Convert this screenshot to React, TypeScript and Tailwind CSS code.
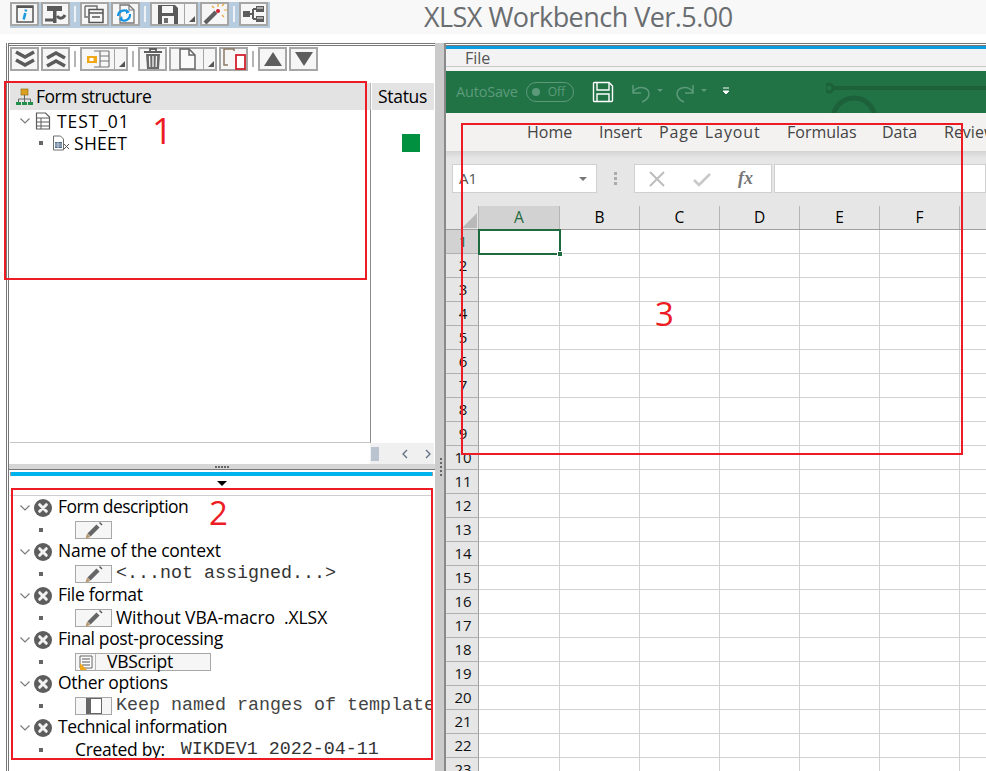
import React from "react";

const UI = "font-['Open_Sans','Noto_Sans',sans-serif]";
const MONO = "font-['Liberation_Mono',monospace]";

type P = { children?: React.ReactNode; w?: number; h?: number };
const Ic = ({ children, w = 20, h = 20 }: P) => (
  <svg width={w} height={h} viewBox={`0 0 ${w} ${h}`} fill="none" className="shrink-0">
    {children}
  </svg>
);

const Btn = ({ children, wide }: { children: React.ReactNode; wide?: boolean }) => (
  <div className={`h-[24px] flex items-center justify-center bg-[#f6f6f6] border-2 border-[#a6a6a6] shrink-0 ${wide ? "w-[35px] border-r" : "w-[29px]"}`}>
    {children}
  </div>
);
const Drop = () => (
  <div className="w-[13px] h-[24px] bg-[#f6f6f6] border-2 border-l-0 border-[#a6a6a6] shrink-0 relative">
    <div className="absolute right-[1px] bottom-[2px] w-0 h-0 border-l-[6px] border-l-transparent border-b-[6px] border-b-[#555]" />
  </div>
);
const Sep = () => <div className="w-[2px] h-[16px] bg-[#b5b5b5] mx-[3px] shrink-0" />;
const SepLight = () => <div className="w-[2px] h-[16px] bg-[#eef2f6] mx-[4px] shrink-0" />;

const Info = () => (
  <Ic>
    <rect x="2" y="2" width="16" height="16" stroke="#555" strokeWidth="1.5" />
    <path d="M2 3h16" stroke="#555" strokeWidth="2" />
    <path d="M11 5.500l-.3 2M10.300 9l-1.600 6.500" stroke="#1d9be0" strokeWidth="2.600" />
  </Ic>
);
const Tools = () => (
  <Ic w={24}>
    <path d="M3 2h15v5H3zM9 7h3.500v12H9z" fill="#595959" />
    <path d="M1 16h10M13 12c2 3 6 3 8-1" stroke="#595959" strokeWidth="3" />
  </Ic>
);
const Windows = () => (
  <Ic w={22}>
    <path d="M1 2h12v3M1 2v11h3" stroke="#6f6f6f" strokeWidth="1.400" />
    <rect x="5" y="5.500" width="14" height="13" stroke="#555" strokeWidth="1.500" fill="#f6f6f6" />
    <path d="M5 9h14M8 13h8" stroke="#555" strokeWidth="1.500" />
  </Ic>
);
const Refresh = () => (
  <Ic w={22}>
    <path d="M5 1h9l5 5v13H5z" stroke="#777" strokeWidth="1.300" fill="#f8f8f8" />
    <path d="M14 1v5h5" stroke="#777" strokeWidth="1.200" />
    <path d="M3 12a6 6 0 0 1 10-4M15 10a6 6 0 0 1-10 5" stroke="#1495e3" strokeWidth="2.200" />
    <path d="M11 5l4 3-4 2zM8 17l-4-2 3-3z" fill="#1495e3" />
  </Ic>
);
const Floppy = () => (
  <Ic w={22}>
    <path d="M1 1h17l3 3v16H1z" fill="#5a5a5a" />
    <rect x="5" y="2" width="11" height="7" fill="#f6f6f6" />
    <rect x="5" y="12" width="12" height="8" fill="#f6f6f6" />
    <rect x="7" y="14" width="4" height="5" fill="#6d6d6d" />
  </Ic>
);
const Wand = () => (
  <Ic w={24} h={22}>
    <path d="M2 20L13 9" stroke="#5f5f5f" strokeWidth="4" />
    <circle cx="15" cy="8" r="2" fill="#d21f2d" />
    <path d="M15 1v3M21 7h3M19 3l2-2M19 12l2 2M9 3l2 2" stroke="#e9a93a" strokeWidth="1.200" />
  </Ic>
);
const Net = () => (
  <Ic w={24}>
    <path d="M1 7h7v6H1zM14 2h8v6h-8zM14 12h8v6h-8z" fill="#5c5c5c" />
    <path d="M8 10h3M11 5v10M11 5h3M11 15h3" stroke="#5c5c5c" strokeWidth="2" />
    <path d="M15 4h6M15 14h6" stroke="#f6f6f6" />
  </Ic>
);
const ChevD = () => (
  <Ic w={22}>
    <path d="M2 3l9 5 9-5M2 11l9 5 9-5" stroke="#5b5b5b" strokeWidth="3.600" />
  </Ic>
);
const ChevU = () => (
  <Ic w={22}>
    <path d="M2 9l9-5 9 5M2 17l9-5 9 5" stroke="#5b5b5b" strokeWidth="3.600" />
  </Ic>
);
const Struct = () => (
  <Ic w={24}>
    <path d="M8 2h15M14 2v16M8 18h15M14 7h9M14 12h9M23 2v16" stroke="#777" strokeWidth="1.200" />
    <rect x="1" y="7" width="10" height="7" fill="#f0a818" />
    <rect x="3.500" y="9" width="4" height="3" fill="#fff" />
  </Ic>
);
const Trash = () => (
  <Ic w={22} h={22}>
    <path d="M2 4h18M8 4V1h6v3" stroke="#5e5e5e" strokeWidth="1.800" />
    <path d="M4 6h14l-1 15H5z" fill="#6a6a6a" />
    <path d="M7.500 8l.4 11M11 8v11M14.500 8l-.4 11" stroke="#f6f6f6" strokeWidth="1.300" />
  </Ic>
);
const Doc = () => (
  <Ic w={20} h={22}>
    <path d="M3 1h9l6 6v14H3z" stroke="#666" strokeWidth="1.500" fill="#fafafa" />
    <path d="M12 1v6h6" stroke="#666" strokeWidth="1.500" />
  </Ic>
);
const Copy = () => (
  <Ic w={24} h={22}>
    <path d="M12 3V1H2v16h4" stroke="#8a7a66" strokeWidth="1.500" />
    <rect x="14" y="7" width="9" height="14" stroke="#d4202f" strokeWidth="1.800" fill="#fff" />
  </Ic>
);

const SheetTree = () => (
  <Ic w={16} h={18}>
    <path d="M1.500 1h9l4 4v12h-13z" stroke="#5d5d5d" strokeWidth="1.200" fill="#fff" />
    <path d="M1.500 6h13M1.500 10h13M1.500 14h13M6 6v11" stroke="#5d5d5d" />
  </Ic>
);
const SheetX = () => (
  <Ic w={18} h={16}>
    <path d="M1.500 1h7l3 3v11h-10z" stroke="#6d6d6d" fill="#fff" />
    <rect x="3" y="7" width="7" height="6" fill="#4e6d8c" />
    <path d="M3 9h7M3 11h7M6 7v6" stroke="#fff" strokeWidth=".6" />
    <path d="M12 9l5 5M17 9l-5 5" stroke="#555" />
  </Ic>
);
const Org = () => (
  <Ic w={17} h={17}>
    <rect x="5" y="1" width="7" height="6" fill="#dba01e" stroke="#98711c" strokeWidth=".7" />
    <path d="M8.500 7v4M2.500 14v-3h12v3M8.500 11v3" stroke="#666" />
    <path d="M0 14h5v3H0zM6 14h5v3H6zM12 14h5v3h-5z" fill="#1f9148" />
  </Ic>
);
const Caret = () => (
  <Ic w={10} h={6}>
    <path d="M.5.5L5 5 9.500.5" stroke="#777" strokeWidth="1.100" />
  </Ic>
);
const Dot = () => <div className="w-[4px] h-[4px] bg-[#666] shrink-0" />;

const XCircle = () => (
  <Ic w={18} h={18}>
    <circle cx="9" cy="9" r="9" fill="#5d5d5d" />
    <path d="M5.700 5.700l6.600 6.600M12.300 5.700l-6.600 6.600" stroke="#f2f2f2" strokeWidth="3" strokeLinecap="round" />
  </Ic>
);
const Pencil = () => (
  <Ic w={18} h={18}>
    <path d="M4 14L13 5" stroke="#666" strokeWidth="4.400" />
    <path d="M14 2l1-1 2.500 2.500-1 1z" fill="#555" />
    <path d="M0.500 17.500l1.500-5 3.500 3.500z" fill="#b99a6e" />
  </Ic>
);
const FieldBtn = ({ children, w = "w-[37px]" }: { children?: React.ReactNode; w?: string }) => (
  <div className={`${w} h-[18px] bg-[#f6f6f6] border border-[#a8a8a8] flex items-center justify-center shrink-0`}>
    {children}
  </div>
);

const Section = ({ title, track, children }: { title: string; track: string; children: React.ReactNode }) => (
  <div className="flex flex-col">
    <div className="h-[22px] flex items-center pl-[10px]">
      <Caret />
      <div className="ml-[4px]"><XCircle /></div>
      <span className={`ml-[6px] mt-[-2px] text-[17.5px] text-black leading-none whitespace-nowrap ${track}`}>{title}</span>
    </div>
    <div className="h-[22px] flex items-center pl-[29px]">
      <Dot />
      <div className="ml-[32px] flex items-center min-w-0">{children}</div>
    </div>
  </div>
);

const rows = Array.from({ length: 23 }, (_, i) => i + 1);
const cols = ["A", "B", "C", "D", "E", "F"];

export default function App() {
  return (
    <div className={`relative w-[986px] h-[771px] overflow-hidden bg-white flex flex-col ${UI}`}>
      {/* Title bar */}
      <div className="h-[34px] bg-[#f8f8f8] shrink-0 relative flex items-start pl-[10px]">
        <div className="mt-[2px] h-[26px] bg-[#b7cddf] flex items-start pr-[2px]">
          <div className="flex items-center gap-[2px]">
            <Btn><Info /></Btn>
            <Btn><Tools /></Btn>
          </div>
          <div className="flex items-center h-[24px]"><SepLight /></div>
          <div className="flex items-center gap-[2px]">
            <Btn><Windows /></Btn>
            <Btn><Refresh /></Btn>
          </div>
          <div className="flex items-center h-[24px]"><SepLight /></div>
          <div className="flex items-center">
            <Btn wide><Floppy /></Btn>
            <Drop />
            <div className="w-[2px]" />
            <Btn><Wand /></Btn>
          </div>
          <div className="flex items-center h-[24px]"><SepLight /></div>
          <Btn><Net /></Btn>
        </div>
        <div className="absolute left-[424px] top-0 text-[27px] leading-[33px] text-[#6a6d70] whitespace-nowrap tracking-[-0.54px]">
          XLSX Workbench Ver.5.00
        </div>
      </div>
      <div className="h-[9px] shrink-0" />

      {/* Body */}
      <div className="flex-1 flex min-h-0 pl-[6px]">
        {/* Left column */}
        <div className="w-[429px] shrink-0 flex flex-col border-l-[3px] border-double border-[#777]">
          <div className="h-[421px] shrink-0 flex flex-col border-t-[3px] border-double border-[#777] pl-[1px] pr-[1px]">
            <div className="h-[26px] shrink-0 flex items-start pt-[1px] bg-white">
              <div className="flex items-center gap-[2px]">
                <Btn><ChevD /></Btn>
                <Btn><ChevU /></Btn>
              </div>
              <div className="flex items-center h-[24px] mx-[1px]"><Sep /></div>
              <Btn wide><Struct /></Btn>
              <Drop />
              <div className="flex items-center h-[24px] mx-[1px]"><Sep /></div>
              <Btn><Trash /></Btn>
              <div className="w-[2px]" />
              <Btn wide><Doc /></Btn>
              <Drop />
              <div className="w-[2px]" />
              <Btn><Copy /></Btn>
              <div className="flex items-center h-[24px] mx-[1px]"><Sep /></div>
              <div className="flex gap-[2px]">
                <Btn><div className="w-0 h-0 border-l-[9px] border-r-[9px] border-b-[14px] border-l-transparent border-r-transparent border-b-[#5d5d5d]" /></Btn>
                <Btn><div className="w-0 h-0 border-l-[9px] border-r-[9px] border-t-[14px] border-l-transparent border-r-transparent border-t-[#5d5d5d]" /></Btn>
              </div>
            </div>
            <div className="h-[11px] shrink-0" />
            <div className="h-[27px] shrink-0 flex bg-[#e3e3e3] text-[17.5px] text-black">
              <div className="w-[361px] flex items-center pl-[6px] gap-[3px] border-r border-[#b5b5b5] shrink-0">
                <Org />
                <span className="tracking-[-0.5px]">Form structure</span>
              </div>
              <div className="flex-1 flex items-center pl-[6px] tracking-[-0.3px] border-l border-white">Status</div>
            </div>
            <div className="h-[333px] shrink-0 flex">
              <div className="w-[361px] shrink-0 border-r border-[#8a8a8a] border-b border-b-[#c4c4c4] text-[17.5px] text-black">
                <div className="h-[22px] flex items-center pl-[10px]">
                  <Caret />
                  <div className="ml-[5px]"><SheetTree /></div>
                  <span className="ml-[6px] tracking-[0.9px]">TEST_01</span>
                </div>
                <div className="h-[22px] flex items-center pl-[29px]">
                  <Dot />
                  <div className="ml-[9px]"><SheetX /></div>
                  <span className="ml-[4px] tracking-[0.3px]">SHEET</span>
                </div>
              </div>
              <div className="flex-1 relative">
                <div className="absolute left-[31px] top-[24px] w-[18px] h-[18px] bg-[#009040]" />
              </div>
            </div>
            <div className="h-[21px] shrink-0 flex justify-end">
              <div className="w-[64px] bg-[#f0f0f0] flex items-center pl-[1px] text-[#5d6f80]">
                <div className="w-[8px] h-[14px] bg-[#b9c4d0]" />
                <svg width="50" height="12" viewBox="0 0 50 12" fill="none" className="ml-[3px]">
                  <path d="M25 2l-4 4 4 4" stroke="#5d6f80" strokeWidth="1.300" />
                  <path d="M44 2l4 4-4 4" stroke="#5d6f80" strokeWidth="1.300" />
                </svg>
              </div>
            </div>
          </div>
          {/* Horizontal splitter */}
          <div className="h-[6px] shrink-0 bg-[#d6d6d6] flex items-center justify-center gap-[1px] border-b border-[#777] relative">
            {[0, 1, 2, 3, 4].map((i) => (
              <div key={i} className="w-[2px] h-[2px] bg-[#666]" />
            ))}
          </div>
          {/* Lower pane */}
          <div className="flex-1 min-h-0 pl-[1px] pr-[2px] flex flex-col">
            <div className="h-[2px] shrink-0" />
            <div className="h-[4px] shrink-0 bg-[#00b4ef] border-x border-[#9a9a9a]" />
            <div className="h-[20px] shrink-0 border-b border-[#cdcdcd] flex justify-center pt-[5px]">
              <div className="w-0 h-0 border-l-[5px] border-r-[5px] border-t-[5px] border-l-transparent border-r-transparent border-t-black" />
            </div>
            <div className="overflow-hidden pt-[1px]">
              <Section title="Form description" track="tracking-[-0.54px]">
                <FieldBtn><Pencil /></FieldBtn>
              </Section>
              <Section title="Name of the context" track="tracking-[-0.22px]">
                <FieldBtn><Pencil /></FieldBtn>
                <span className={`${MONO} ml-[4px] text-[18.33px] leading-none text-[#333] whitespace-nowrap`}>&lt;...not assigned...&gt;</span>
              </Section>
              <Section title="File format" track="tracking-[-0.3px]">
                <FieldBtn><Pencil /></FieldBtn>
                <span className="ml-[4px] text-[17.5px] leading-none text-black tracking-[-0.06px] whitespace-pre">Without VBA-macro  .XLSX</span>
              </Section>
              <Section title="Final post-processing" track="tracking-[-0.35px]">
                <FieldBtn w="w-[136px]">
                  <div className="w-full h-full flex items-center">
                    <div className="w-[20px] h-full border-r border-[#b5b5b5] flex items-center justify-center relative shrink-0">
                      <Ic w={14} h={14}>
                        <path d="M1 1h12v12H1z" fill="#fff" stroke="#666" />
                        <path d="M3 4h8M3 7h8M3 10h8" stroke="#555" strokeWidth="1.200" />
                      </Ic>
                      <div className="absolute left-[4px] bottom-0 w-0 h-0 border-r-[7px] border-r-transparent border-b-[7px] border-b-[#efa81c]" />
                    </div>
                    <span className="ml-[11px] text-[17.5px] leading-none text-black tracking-[-0.3px] whitespace-nowrap">VBScript</span>
                  </div>
                </FieldBtn>
              </Section>
              <Section title="Other options" track="tracking-[-0.3px]">
                <FieldBtn>
                  <div className="w-[16px] h-[16px] border border-[#666] border-l-[5px] bg-white" />
                </FieldBtn>
                <span className={`${MONO} ml-[4px] text-[18.33px] leading-none text-[#444] whitespace-nowrap`}>Keep named ranges of template</span>
              </Section>
              <Section title="Technical information" track="tracking-[-0.4px]">
                <span className="text-[17.5px] leading-none text-black tracking-[-0.3px] whitespace-nowrap">Created by:</span>
                <span className={`${MONO} ml-[16px] text-[18.33px] leading-none text-[#333] whitespace-nowrap`}>WIKDEV1 2022-04-11</span>
              </Section>
            </div>
          </div>
        </div>

        {/* Vertical splitter */}
        <div className="w-[11px] shrink-0 bg-[#cbcbcb] border-r-2 border-[#8a8a8a] relative">
          <div className="absolute left-[5px] top-[415px] flex flex-col gap-[2px]">
            {[0, 1, 2, 3, 4].map((i) => (
              <div key={i} className="w-[2px] h-[2px] bg-[#666]" />
            ))}
          </div>
        </div>

        {/* Excel */}
        <div className="flex-1 min-w-0 flex flex-col border-t-[3px] border-double border-[#777] overflow-hidden">
          <div className="h-[3px] shrink-0 bg-[#0c9ce0]" />
          <div className="h-[18px] shrink-0 bg-[#f3f3f3] border-b border-[#c8c8c8] pl-[19px] flex items-center text-[16px] text-[#555]">File</div>
          <div className="h-[4px] shrink-0 bg-[#f3f3f3]" />
          {/* QAT */}
          <div className="h-[42px] shrink-0 bg-[#217346] relative overflow-hidden flex items-center pl-[10px]">
            <span className="text-[14.5px] text-[#5c9a7a] tracking-[-0.2px]">AutoSave</span>
            <div className="ml-[8px] w-[48px] h-[20px] rounded-full border border-[#5c9a7a] flex items-center pl-[5px] gap-[8px] text-[12px] text-[#5c9a7a]">
              <div className="w-[8px] h-[8px] rounded-full bg-[#5c9a7a]" />
              Off
            </div>
            <svg width="22" height="22" viewBox="0 0 22 22" fill="none" className="ml-[18px]">
              <path d="M1.500 2.500A1 1 0 0 1 2.500 1.500H17L20.500 5V19.500A1 1 0 0 1 19.500 20.500H2.500A1 1 0 0 1 1.500 19.500z" stroke="#fff" strokeWidth="1.400" />
              <path d="M5 2v7h12V2M5 20v-7h12v7" stroke="#fff" strokeWidth="1.400" />
            </svg>
            <svg width="100" height="22" viewBox="0 0 100 22" fill="none" className="ml-[17px]">
              <path d="M2 4v8h8M2 11c5-7 16-5 16 2 0 4-4 7-7 8" stroke="#5c9a7a" strokeWidth="1.500" />
              <path d="M26 8l3 3 3-3z" fill="#5c9a7a" />
              <path d="M62 4v8h-8M62 11c-5-7-16-5-16 2 0 4 4 7 7 8" stroke="#5c9a7a" strokeWidth="1.500" />
              <path d="M70 8l3 3 3-3z" fill="#5c9a7a" />
              <path d="M92 7h6M92 10l3 3 3-3z" stroke="#fff" strokeWidth="1" fill="#fff" />
            </svg>
            <svg width="160" height="42" viewBox="0 0 160 42" fill="none" className="absolute left-[380px] top-0">
              <circle cx="3" cy="17" r="4" stroke="#1c6139" strokeWidth="3" />
              <path d="M7 17h153" stroke="#1c6139" strokeWidth="4" />
              <path d="M7 48a21 21 0 0 1 42 0" stroke="#1c6139" strokeWidth="5" />
              <circle cx="84" cy="50" r="8" fill="#1c6139" />
            </svg>
          </div>
          {/* Ribbon tabs */}
          <div className="h-[38px] shrink-0 bg-[#f3f2f1] flex items-start pt-[8px] pl-[81px] text-[16px] leading-[22px] text-[#444] whitespace-nowrap overflow-hidden">
            <span className="w-[72px] shrink-0">Home</span>
            <span className="w-[60px] shrink-0">Insert</span>
            <span className="w-[128px] shrink-0 tracking-[0.9px] [word-spacing:1px]">Page Layout</span>
            <span className="w-[95px] shrink-0">Formulas</span>
            <span className="w-[62px] shrink-0">Data</span>
            <span className="shrink-0">Review</span>
          </div>
          {/* Formula bar */}
          <div className="h-[55px] shrink-0 bg-[linear-gradient(#d4d4d4_0px,#e6e6e6_7px)] flex items-start pt-[13px] pl-[6px]">
            <div className="w-[145px] h-[29px] bg-white border border-[#d0d0d0] flex items-center justify-between px-[6px] text-[15px] text-[#555]">
              A1
              <div className="w-0 h-0 border-l-[4px] border-r-[4px] border-t-[4px] border-l-transparent border-r-transparent border-t-[#777] mr-[3px]" />
            </div>
            <div className="w-[37px] h-[29px] flex flex-col items-center justify-center gap-[2px]">
              <div className="w-[3px] h-[3px] bg-[#aaa]" />
              <div className="w-[3px] h-[3px] bg-[#aaa]" />
              <div className="w-[3px] h-[3px] bg-[#aaa]" />
            </div>
            <div className="w-[138px] h-[29px] bg-white border border-[#d0d0d0] flex items-center pl-[13px] text-[#c8c8c8]">
              <svg width="18" height="18" viewBox="0 0 18 18" fill="none">
                <path d="M2 2l14 14M16 2L2 16" stroke="#bdbdbd" strokeWidth="2" />
              </svg>
              <svg width="18" height="18" viewBox="0 0 18 18" fill="none" className="ml-[27px]">
                <path d="M1 10l5 5L17 4" stroke="#c8c8c8" strokeWidth="2.600" />
              </svg>
              <span className="ml-[27px] font-['Liberation_Serif',serif] italic font-bold text-[18px] text-[#777]">fx</span>
            </div>
            <div className="flex-1 h-[29px] ml-[2px] bg-white border border-[#d0d0d0]" />
          </div>
          {/* Grid */}
          <div className="flex-1 min-h-0 relative bg-white overflow-hidden">
            <div className="h-[24px] flex bg-[#e6e6e6] border-b border-[#9f9f9f] text-[15.5px]">
              <div className="w-[33px] shrink-0 relative border-r border-[#b5b5b5]">
                <div className="absolute right-[1px] bottom-[1px] w-0 h-0 border-l-[15px] border-l-transparent border-b-[15px] border-b-[#b9b9b9]" />
              </div>
              {cols.map((c, i) => (
                <div
                  key={c}
                  className={`shrink-0 flex items-center justify-center border-r border-[#b5b5b5] ${i === 0 ? "bg-[#d2d2d2] text-[#1f6b40] w-[81px]" : "text-black w-[80px]"}`}
                >
                  {c}
                </div>
              ))}
            </div>
            {rows.map((r) => (
              <div key={r} className="h-[24px] flex border-b border-[#d2d2d2]">
                <div className={`w-[33px] shrink-0 flex items-center justify-center pl-[2px] border-r border-b border-r-[#9f9f9f] border-b-[#b0b0b0] mb-[-1px] text-[15px] ${r === 1 ? "bg-[#d2d2d2] text-[#1f6b40]" : "bg-[#e6e6e6] text-[#111]"}`}>
                  {r}
                </div>
                {cols.map((c, i) => (
                  <div key={c} className={`shrink-0 border-r border-[#d2d2d2] ${i === 0 ? "w-[81px]" : "w-[80px]"}`} />
                ))}
              </div>
            ))}
            <div className="absolute left-[32px] top-[23px] w-[83px] h-[26px] border-2 border-[#1f6b40]">
              <div className="absolute right-[-4px] bottom-[-4px] w-[6px] h-[6px] bg-[#1f6b40] border border-white" />
            </div>
          </div>
        </div>
      </div>

      {/* Annotation overlays */}
      <div className="absolute left-[4px] top-[81px] w-[363px] h-[199px] border-2 border-[#ed1c24]" />
      <div className="absolute left-[11px] top-[488px] w-[422px] h-[272px] border-2 border-[#ed1c24]" />
      <div className="absolute left-[461px] top-[123px] w-[502px] h-[332px] border-2 border-[#ed1c24]" />
      <div className="absolute left-[152px] top-[108px] text-[36px] leading-[46px] text-[#ed1c24]">1</div>
      <div className="absolute left-[209px] top-[490px] text-[33px] leading-[46px] text-[#ed1c24]">2</div>
      <div className="absolute left-[655px] top-[291px] text-[33px] leading-[46px] text-[#ed1c24]">3</div>
    </div>
  );
}
